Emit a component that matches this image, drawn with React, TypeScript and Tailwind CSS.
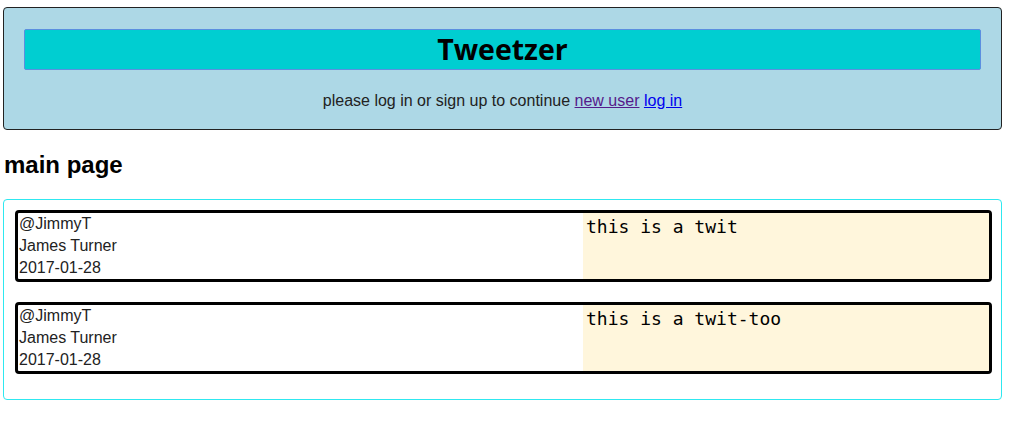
import React from "react";

const tweets = [
  { handle: "@JimmyT", name: "James Turner", date: "2017-01-28", text: "this is a twit" },
  { handle: "@JimmyT", name: "James Turner", date: "2017-01-28", text: "this is a twit-too" },
];

export default function App() {
  return (
    <div className="min-h-[432px] bg-white px-[3px] pt-[7px] text-black [font-family:'Liberation_Sans',Arial,sans-serif] w-[1006px]">
      <div className="w-[999px] rounded-[4px] border border-[#222] bg-[#add8e6] px-[20px] pt-[21px] pb-[19px]">
        <div className="flex h-[41px] items-center justify-center rounded-[2px] border border-[#5b8fe0] bg-[#00ced1]">
          <span className="text-[28.5px] font-bold leading-none [font-family:'Open_Sans',sans-serif]">Tweetzer</span>
        </div>
        <div className="mt-[22px] text-center text-[16px] leading-[18px] text-[#222]">
          please log in or sign up to continue{" "}
          <a href="#" className="text-[#551a8b] underline">new user</a>{" "}
          <a href="#" className="text-[#0000ee] underline">log in</a>
        </div>
      </div>
      <h2 className="mt-[21px] pl-[1px] text-[24px] font-bold leading-[28px]">main page</h2>
      <div className="mt-[20px] w-[999px] rounded-[4px] border border-[#2ee8f0] px-[11px] pt-[10px] pb-[25px]">
        {tweets.map((t, i) => (
          <div
            key={i}
            className={`flex h-[72px] w-[977px] overflow-hidden rounded-[4px] border-[3px] border-black ${i > 0 ? "mt-[20px]" : ""}`}
          >
            <div className="w-[565px] pl-[1px] text-[16px] leading-[22px] text-[#222]">
              <div>{t.handle}</div>
              <div>{t.name}</div>
              <div>{t.date}</div>
            </div>
            <div className="flex-1 bg-[#fff6dc] pl-[3px] pt-[3px] text-[18px] leading-[22px] [font-family:'DejaVu_Sans_Mono',monospace]">
              {t.text}
            </div>
          </div>
        ))}
      </div>
    </div>
  );
}
